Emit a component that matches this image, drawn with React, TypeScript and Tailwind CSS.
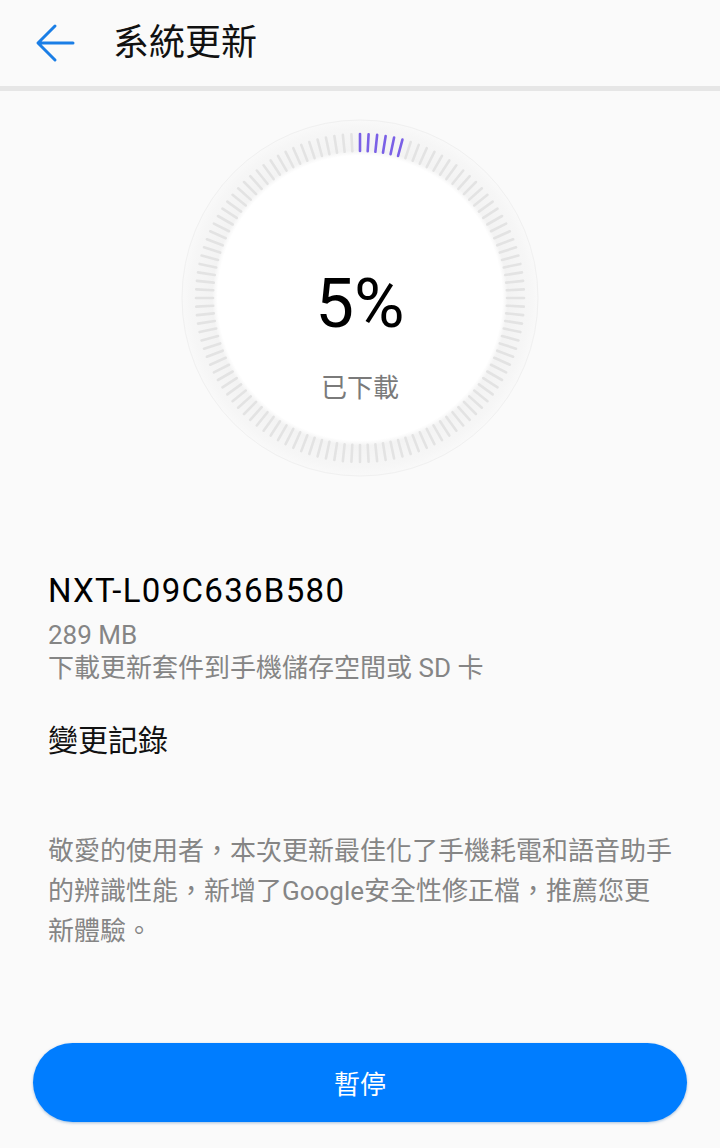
import React from "react";

const ticks = Array.from({ length: 120 }, (_, i) => i);

function Dial() {
  const c = 180;
  const r1 = 147;
  const r2 = 164;
  return (
    <svg width="360" height="360" viewBox="0 0 360 360">
      <defs>
        <radialGradient id="ring" cx="50%" cy="50%" r="50%">
          <stop offset="0" stopColor="#ffffff" />
          <stop offset="0.8" stopColor="#ffffff" />
          <stop offset="0.83" stopColor="#f3f3f3" />
          <stop offset="0.95" stopColor="#f6f6f6" />
          <stop offset="1" stopColor="#f9f9f9" />
        </radialGradient>
      </defs>
      <circle cx={c} cy={c} r={178} fill="url(#ring)" stroke="#f0f0f0" strokeWidth={1} />
      {ticks.map((i) => {
        const a = (i * 3 * Math.PI) / 180;
        const s = Math.sin(a);
        const co = Math.cos(a);
        return (
          <line
            key={i}
            x1={c + r1 * s}
            y1={c - r1 * co}
            x2={c + r2 * s}
            y2={c - r2 * co}
            stroke={i < 6 ? "#7a60e6" : "#e3e3e3"}
            strokeWidth={2.6}
            strokeLinecap="round"
          />
        );
      })}
    </svg>
  );
}

export default function App() {
  return (
    <div
      className="w-[720px] h-[1148px] bg-[#fafafa] flex flex-col"
      style={{ fontFamily: 'Roboto, "Noto Sans CJK TC", sans-serif' }}
    >
      <header className="h-[91px] shrink-0 bg-[#fafafa] border-b-[5px] border-[#e6e6e6] flex items-center">
        <svg width="48" height="48" viewBox="0 0 48 48" className="ml-[31px]">
          <path
            d="M42 24 H7.5 M24 7 L7 24 L24 41"
            fill="none"
            stroke="#1a7ee6"
            strokeWidth="3"
            strokeLinecap="round"
            strokeLinejoin="round"
          />
        </svg>
        <h1 className="ml-[34px] text-[36px] leading-none text-[#111] font-normal">系統更新</h1>
      </header>

      <div className="mt-[27px] flex justify-center">
        <div className="relative w-[360px] h-[360px]">
          <Dial />
          <div className="absolute inset-0 flex flex-col items-center">
            <div className="mt-[146px] text-[69px] leading-[80px] text-black">5%</div>
            <div className="mt-[27px] text-[26px] leading-[34px] text-[#7a7a7a]">已下載</div>
          </div>
        </div>
      </div>

      <div className="px-[48px]">
        <div className="mt-[94px] text-[33px] leading-[38px] tracking-[1.3px] text-black">NXT-L09C636B580</div>
        <div className="mt-[10px] text-[26px] leading-[30px] text-[#858585]">289 MB</div>
        <div className="mt-[3px] text-[26px] leading-[30px] text-[#858585]">下載更新套件到手機儲存空間或 SD 卡</div>
        <div className="mt-[38px] text-[30px] leading-[40px] text-[#111]">變更記錄</div>
        <p className="mt-[70px] text-[26px] leading-[40px] text-[#858585]">
          敬愛的使用者，本次更新最佳化了手機耗電和語音助手的辨識性能，新增了Google安全性修正檔，推薦您更新體驗。
        </p>
      </div>

      <div className="flex-1" />

      <div className="px-[33px] pb-[26px]">
        <button className="w-full h-[79px] pt-[5px] rounded-full bg-[#007dff] text-white text-[26px] shadow-[0_1px_3px_rgba(0,80,160,0.35)]">
          暫停
        </button>
      </div>
    </div>
  );
}
